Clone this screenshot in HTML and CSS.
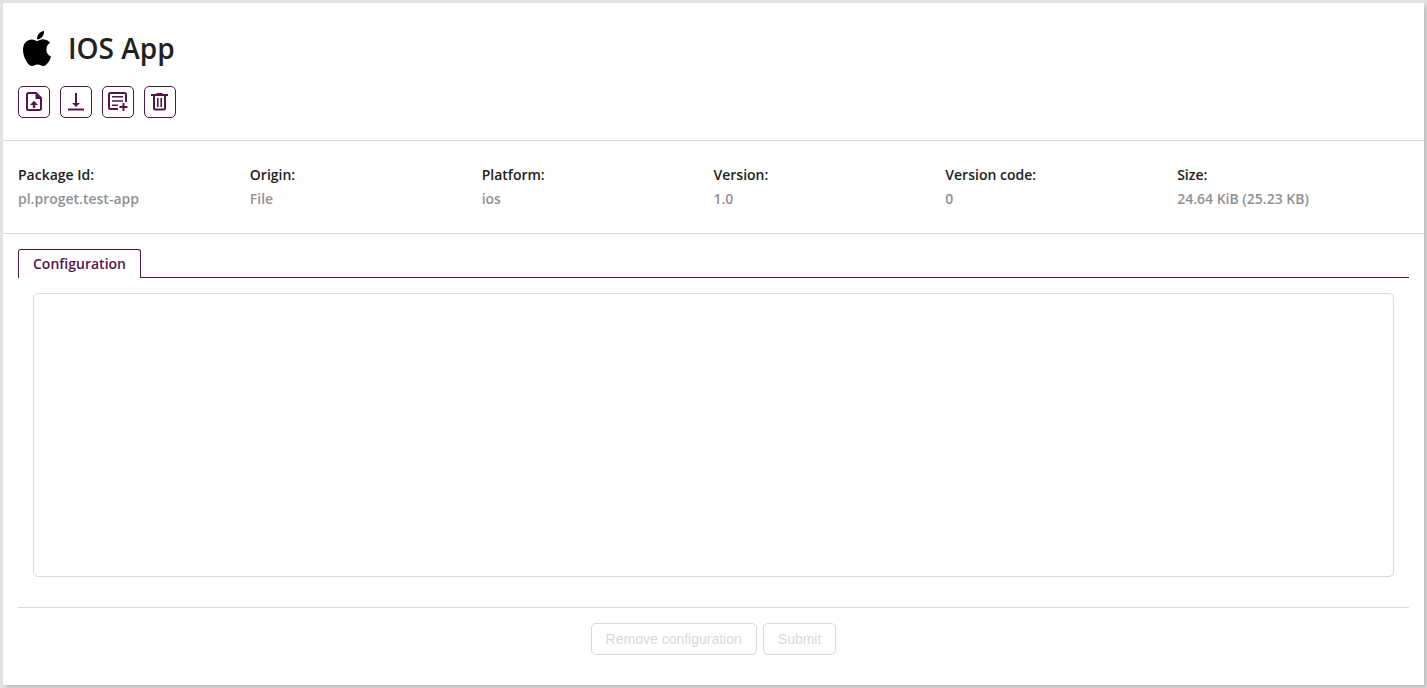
FILE: index.html
```html
<!DOCTYPE html>
<html lang="en">
<head>
<meta charset="utf-8">
<title>IOS App</title>
<link rel="stylesheet" href="styles.css">
</head>
<body>
<main class="panel">
  <header class="head">
    <div class="title-row">
      <svg class="logo" viewBox="4 32 376 448" preserveAspectRatio="none" aria-hidden="true"><path d="M318.7 268.7c-.2-36.7 16.4-64.4 50-84.8-18.8-26.9-47.2-41.7-84.7-44.6-35.5-2.8-74.3 20.7-88.5 20.7-15 0-49.4-19.7-76.4-19.7C63.3 141.2 4 184.8 4 273.5q0 39.3 14.4 81.2c12.8 36.7 59 126.7 107.2 125.2 25.2-.6 43-17.9 75.8-17.9 31.8 0 48.3 17.9 76.4 17.9 48.6-.7 90.4-82.5 102.6-119.3-65.2-30.7-61.7-90-61.7-91.9zm-56.6-164.2c27.3-32.4 24.8-61.9 24-72.5-24.1 1.4-52 16.4-67.9 34.9-17.5 19.8-27.8 44.3-25.6 71.9 26.1 2 49.900-11.400 69.500-34.300z"/></svg>
      <h1 class="title">IOS App</h1>
    </div>
    <div class="actions">
      <button class="action" type="button" aria-label="Upload file">
        <svg class="icon" viewBox="0 0 20 20"><path d="M12 1H4.500A1.500 1.500 0 0 0 3 2.500v14A1.500 1.500 0 0 0 4.500 18h11a1.500 1.500 0 0 0 1.500-1.500V6z" class="line"/><path d="M11.500 1l6 6h-6zM10 8.800l4 4.200h-2.800v3H8.800v-3H6z"/></svg>
      </button>
      <button class="action" type="button" aria-label="Download">
        <svg class="icon" viewBox="0 0 20 20"><path d="M9 1h2v10h3l-4 4-4-4h3zM2 16.500h16v2H2z"/></svg>
      </button>
      <button class="action" type="button" aria-label="Add configuration">
        <svg class="icon" viewBox="0 0 20 20"><path d="M18 10V2.500A1.500 1.500 0 0 0 16.500 1h-14A1.500 1.500 0 0 0 1 2.500v13A1.500 1.500 0 0 0 2.500 17H10" class="line"/><path d="M4 4h11v1.600H4zM4 8.200h11v1.600H4zM4 12.400h6V14H4zM14.500 11h2v3h3v2h-3v3h-2v-3h-3v-2h3z"/></svg>
      </button>
      <button class="action" type="button" aria-label="Delete">
        <svg class="icon" viewBox="0 0 20 20"><path d="M6.500 1h6v1H18v2H1V2h5.500zM7 6h1.600v9H7zM10.400 6H12v9h-1.600z"/><path d="M4 3v13.500A1 1 0 0 0 5 17.500h9a1 1 0 0 0 1-1V3" class="line"/></svg>
      </button>
    </div>
  </header>
  <dl class="details">
    <div><dt>Package Id:</dt><dd>pl.proget.test-app</dd></div>
    <div><dt>Origin:</dt><dd>File</dd></div>
    <div><dt>Platform:</dt><dd>ios</dd></div>
    <div><dt>Version:</dt><dd>1.0</dd></div>
    <div><dt>Version code:</dt><dd>0</dd></div>
    <div><dt>Size:</dt><dd>24.64 KiB (25.23 KB)</dd></div>
  </dl>
  <section class="content">
    <div class="tabs" role="tablist">
      <button class="tab" type="button" role="tab" aria-selected="true">Configuration</button>
    </div>
    <div class="editor-wrap">
      <textarea class="editor" aria-label="Configuration" rows="14"></textarea>
    </div>
    <footer class="footer">
      <button class="btn" type="button" disabled>Remove configuration</button>
      <button class="btn" type="button" disabled>Submit</button>
    </footer>
  </section>
</main>
</body>
</html>
```
FILE: styles.css
```css
* { box-sizing: border-box; }

body {
  margin: 0;
  padding: 3px;
  background: #e4e4e4;
  color: #212121;
  font: 600 14px/24px "Open Sans", sans-serif;
}

.panel {
  background: #fff;
  box-shadow: 3px 3px 5px #bbb;
}

.head {
  padding: 23px 15px 22px;
  border-bottom: 1px solid #d9d9d9;
}

.title-row {
  display: flex;
  align-items: center;
  gap: 17px;
  padding-left: 5px;
}

.logo {
  width: 28px;
  height: 35px;
}

.title {
  margin: 0;
  font-size: 28px;
  font-weight: 600;
  line-height: 44px;
}

.actions {
  display: flex;
  gap: 10px;
  margin-top: 16px;
}

.action {
  display: flex;
  align-items: center;
  justify-content: center;
  width: 32px;
  height: 32px;
  padding: 0;
  border: 1px solid #551549;
  border-radius: 5px;
  background: #fff;
  color: #551549;
}

.icon {
  width: 20px;
  height: 20px;
  fill: currentColor;
}

.line {
  fill: none;
  stroke: currentColor;
  stroke-width: 2;
}

.details {
  display: grid;
  grid-template-columns: repeat(6, 1fr);
  margin: 0;
  padding: 22px 15px;
  border-bottom: 1px solid #d9d9d9;
}

.details dd {
  margin: 0;
  color: #919191;
}

.content {
  padding: 15px 15px 30px;
}

.tabs {
  display: flex;
  border-bottom: 1px solid #551549;
}

.tab {
  height: 29px;
  margin-bottom: -1px;
  padding: 0 14px;
  border: 1px solid #551549;
  border-bottom: 0;
  border-radius: 3px 3px 0 0;
  background: #fff;
  color: #551549;
  font: inherit;
}

.editor-wrap {
  padding: 15px 15px 30px;
  border-bottom: 1px solid #d9d9d9;
}

.editor {
  display: block;
  width: 100%;
  padding: 1px 10px;
  border: 1px solid #d9d9d9;
  border-radius: 5px;
  background: #fff;
  font: 14px/20px "Liberation Mono", monospace;
  resize: none;
}

.footer {
  display: flex;
  justify-content: center;
  gap: 6px;
  padding-top: 15px;
}

.btn {
  height: 32px;
  padding: 0 14px;
  border: 1px solid #d9d9d9;
  border-radius: 5px;
  background: #fff;
  color: #d9d9d9;
  font: 14px/20px "Liberation Sans", Arial, sans-serif;
}
```
